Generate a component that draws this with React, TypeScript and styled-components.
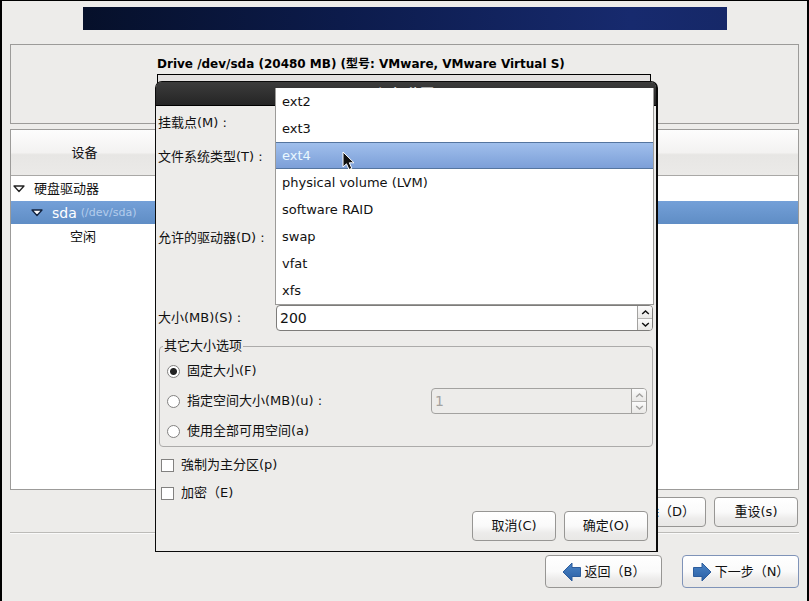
import React, { useState } from "react";
import styled, { createGlobalStyle } from "styled-components";

const GlobalStyle = createGlobalStyle`
  *, *::before, *::after { box-sizing: border-box; }
  body {
    margin: 0;
    background: #edecea;
    color: #111;
    font-family: "DejaVu Sans", "Noto Sans CJK SC", sans-serif;
    font-size: 13px;
    line-height: 20px;
  }
  button, input { font: inherit; color: inherit; }
`;

const Screen = styled.div`
  position: relative;
  display: flex;
  flex-direction: column;
  min-height: 100vh;
  padding: 6px 8px 13px;
  border: solid #000;
  border-width: 1px 2px 0;
  background: #edecea;
`;

const Banner = styled.header`
  height: 23px;
  margin: 0 72px 14px 73px;
  background: linear-gradient(90deg, #06102a, #0c1b4b 40%, #172a6e 85%, #162868);
`;

const DrivePanel = styled.section`
  height: 80px;
  padding: 9px 147px 0 146px;
  border: 1px solid #9c9b99;
  overflow: hidden;
`;

const DriveTitle = styled.h1`
  margin: 0;
  font-size: 12px;
  line-height: 20px;
  font-weight: bold;
  white-space: nowrap;
  color: #000;
`;

const DriveBar = styled.div`
  height: 40px;
  border: 1px solid #000;
  background: #e3e1e0;
`;

const TreeFrame = styled.div`
  flex: 1;
  margin: 5px 0 7px;
  border: 1px solid #9c9b99;
  background: #fff;
`;

const Tree = styled.table`
  width: 100%;
  border-collapse: separate;
  border-spacing: 0;
`;

const HeadCell = styled.th`
  height: 46px;
  padding: 0;
  border-bottom: 1px solid #a9a8a6;
  background: linear-gradient(#fdfdfd, #f3f2f1 50%, #e7e6e4 55%, #ebeae8);
  font-weight: normal;
  text-align: center;
`;

const TreeRow = styled.tr<{ $selected?: boolean }>`
  background: ${(p) => (p.$selected ? "linear-gradient(#74a0d8, #5f8dc5)" : "#fff")};
  color: ${(p) => (p.$selected ? "#fff" : "#111")};
`;

const TreeCell = styled.td<{ $level: number }>`
  height: ${(p) => [25, 23, 25][p.$level]}px;
  padding: 0 0 0 ${(p) => [2, 20, 59][p.$level]}px;
`;

const Node = styled.span<{ $large?: boolean }>`
  display: flex;
  align-items: center;
  gap: 9px;
  font-size: ${(p) => (p.$large ? 14 : 13)}px;
`;

const DevicePath = styled.small`
  margin-left: -5px;
  font-size: 11px;
  color: #b4cdec;
`;

const ButtonBar = styled.div<{ $gap: number; $end?: number }>`
  display: flex;
  justify-content: flex-end;
  gap: ${(p) => p.$gap}px;
  padding-right: ${(p) => p.$end ?? 0}px;
`;

const PushButton = styled.button<{ $tall?: boolean; $focus?: boolean }>`
  display: flex;
  align-items: center;
  justify-content: center;
  gap: 3px;
  min-width: ${(p) => (p.$tall ? 117 : 84)}px;
  height: ${(p) => (p.$tall ? 33 : 30)}px;
  padding: 0 6px;
  border: 1px solid ${(p) => (p.$focus ? "#7f93b8" : "#979694")};
  border-radius: 4px;
  background: linear-gradient(#fff, #fafafa 50%, #ecebea 75%, #e9e8e6);
  white-space: nowrap;
`;

const Divider = styled.hr`
  width: 100%;
  height: 2px;
  margin: 5px 0 21px;
  border: solid;
  border-width: 1px 0;
  border-color: #bcbbb8 #fff #fafafa;
`;

const DialogLayer = styled.div`
  position: absolute;
  inset: 0;
  padding: 80px 149px 0 153px;
`;

const Dialog = styled.section`
  border: solid #0a0a0a;
  border-width: 1px 2px 1px 1px;
  border-radius: 7px 7px 0 0;
  background: #edecea;
`;

const TitleBar = styled.h2`
  height: 24px;
  margin: 0;
  border-bottom: 1px solid #000;
  border-radius: 5px 5px 0 0;
  background: linear-gradient(#3c3c3c, #252525);
  color: #fff;
  font-size: 14px;
  line-height: 24px;
  text-align: center;
`;

const FormBody = styled.div`
  padding: 0 3px 10px 2px;
`;

const FieldRow = styled.div<{ $height: number }>`
  display: grid;
  grid-template-columns: 117px 1fr;
  align-items: center;
  height: ${(p) => p.$height}px;
`;

const Field = styled.div`
  position: relative;
  height: 100%;
  display: flex;
  align-items: center;
`;

const MountInput = styled.input`
  width: 100%;
  height: 26px;
  border: 1px solid #8f8e8c;
  border-radius: 4px;
`;

const Popup = styled.div`
  position: absolute;
  z-index: 2;
  top: -51px;
  left: 0;
  right: -1px;
  border: 1px solid #9c9b99;
  border-top: 0;
  background: #fff;
`;

const Option = styled.button<{ $active: boolean }>`
  position: relative;
  display: block;
  width: 100%;
  height: 27px;
  padding: 0 6px;
  border: solid ${(p) => (p.$active ? "#55759f" : "transparent")};
  border-width: 1px 0;
  background: ${(p) => (p.$active ? "linear-gradient(#a0bfec, #7c9fd8)" : "#fff")};
  color: ${(p) => (p.$active ? "#e9f8ff" : "#111")};
  text-align: left;
`;

const Pointer = styled.svg`
  position: absolute;
  left: 66px;
  top: 8px;
`;

const SpinFrame = styled.div<{ $off?: boolean }>`
  display: flex;
  width: ${(p) => (p.$off ? "45%" : "100%")};
  height: 26px;
  margin-left: ${(p) => (p.$off ? "auto" : "1px")};
  border: 1px solid ${(p) => (p.$off ? "#a3a2a0" : "#7d7c7a")};
  border-radius: 4px;
  background: ${(p) => (p.$off ? "#edecea" : "#fff")};
  color: ${(p) => (p.$off ? "#a3a2a0" : "#111")};
  overflow: hidden;
`;

const SpinInput = styled.input`
  flex: 1;
  min-width: 0;
  padding: 0 3px;
  border: 0;
  outline: 0;
  background: transparent;
  font-size: 14px;
  appearance: textfield;
  &::-webkit-inner-spin-button { appearance: none; margin: 0; }
`;

const Steppers = styled.div`
  display: grid;
  grid-template-rows: 1fr 1fr;
  width: 15px;
  border-left: 1px solid #a3a2a0;
`;

const Step = styled.button`
  display: grid;
  place-items: center;
  padding: 0;
  border: 0;
  background: linear-gradient(#fbfbfb, #e9e8e6);
  & + & { border-top: 1px solid #b5b4b2; }
`;

const Group = styled.fieldset`
  min-width: 0;
  margin: 1px 0 4px 1px;
  padding: 0 5px 0 3px;
  border: 1px solid #acabaa;
  border-radius: 4px;
`;

const Legend = styled.legend`
  padding: 0 1px;
  height: 20px;
`;

const ChoiceRow = styled.div<{ $height: number; $inset: number }>`
  display: flex;
  align-items: center;
  height: ${(p) => p.$height}px;
  padding-left: ${(p) => p.$inset}px;
`;

const Choice = styled.label`
  display: flex;
  align-items: center;
  gap: 7px;
  white-space: nowrap;
`;

const Radio = styled.input`
  appearance: none;
  width: 13px;
  height: 13px;
  margin: 0;
  border: 1px solid #828180;
  border-radius: 50%;
  background: #fff;
  &:checked { background: radial-gradient(circle, #222 0 3px, #fff 4px); }
`;

const Check = styled.input`
  appearance: none;
  width: 13px;
  height: 13px;
  margin: 0;
  border: 1px solid #828180;
  background: #fff;
  &:checked { background: #333; }
`;

const DialogActions = styled(ButtonBar)`
  margin-top: 4px;
`;

const Expander = ({ light }: { light?: boolean }) => (
  <svg width="12" height="8" viewBox="0 0 12 8" aria-hidden="true">
    <path d="M1 1h10L6 6.5z" fill="#fff" stroke={light ? "#10203c" : "#222"} strokeWidth="1.3" strokeLinejoin="round" />
  </svg>
);

const Chevron = ({ down }: { down?: boolean }) => (
  <svg width="9" height="6" viewBox="0 0 9 6" aria-hidden="true">
    <path d={down ? "M1.2 1l3.3 3L7.8 1" : "M1.2 5l3.3-3 3.3 3"} fill="none" stroke="currentColor" strokeWidth="1.5" />
  </svg>
);

const ArrowIcon = ({ left }: { left?: boolean }) => (
  <svg width="20" height="20" viewBox="0 0 20 20" aria-hidden="true">
    <defs>
      <linearGradient id={left ? "arrowBack" : "arrowNext"} x1="0" y1="0" x2="0" y2="1">
        <stop offset="0" stopColor="#4a84c6" />
        <stop offset="1" stopColor="#2a5fa4" />
      </linearGradient>
    </defs>
    <path
      d={left ? "M10 1v4.5h8.5v9H10V19L1 10z" : "M10 1v4.5H1.5v9H10V19l9-9z"}
      fill={`url(#${left ? "arrowBack" : "arrowNext"})`}
      stroke="#2c5c9c"
      strokeLinejoin="round"
    />
  </svg>
);

const fileSystems = ["ext2", "ext3", "ext4", "physical volume (LVM)", "software RAID", "swap", "vfat", "xfs"];

type SpinProps = { id: string; initial: number; label?: string; disabled?: boolean };

function SpinBox({ id, initial, label, disabled }: SpinProps) {
  const [value, setValue] = useState(initial);
  return (
    <SpinFrame $off={disabled}>
      <SpinInput
        id={id}
        type="number"
        aria-label={label}
        value={value}
        disabled={disabled}
        onChange={(e) => setValue(Number(e.target.value))}
      />
      <Steppers>
        <Step type="button" aria-label="+" disabled={disabled} onClick={() => setValue(value + 1)}>
          <Chevron />
        </Step>
        <Step type="button" aria-label="-" disabled={disabled} onClick={() => setValue(value - 1)}>
          <Chevron down />
        </Step>
      </Steppers>
    </SpinFrame>
  );
}

function PartitionDialog() {
  const [active, setActive] = useState("ext4");
  const [sizeMode, setSizeMode] = useState("fixed");
  return (
    <Dialog role="dialog" aria-labelledby="dialog-title">
      <TitleBar id="dialog-title">添加分区</TitleBar>
      <FormBody>
        <FieldRow $height={33}>
          <label htmlFor="mount">挂载点(M) :</label>
          <Field>
            <MountInput id="mount" />
          </Field>
        </FieldRow>
        <FieldRow $height={36}>
          <span id="fs-label">文件系统类型(T) :</span>
          <Field>
            <Popup role="listbox" aria-labelledby="fs-label">
              {fileSystems.map((name) => (
                <Option
                  key={name}
                  type="button"
                  role="option"
                  aria-selected={name === active}
                  $active={name === active}
                  onClick={() => setActive(name)}
                >
                  {name}
                  {name === active && (
                    <Pointer width="14" height="20" viewBox="0 0 14 20" aria-hidden="true">
                      <path d="M1 1v15l3.5-3.2L7 18.5l2.8-1.2-2.5-5.5H12z" fill="#111" stroke="#fff" strokeWidth="1" />
                    </Pointer>
                  )}
                </Option>
              ))}
            </Popup>
          </Field>
        </FieldRow>
        <FieldRow $height={126}>
          <span>允许的驱动器(D) :</span>
        </FieldRow>
        <FieldRow $height={34}>
          <label htmlFor="size">大小(MB)(S) :</label>
          <Field>
            <SpinBox id="size" initial={200} />
          </Field>
        </FieldRow>
        <Group>
          <Legend>其它大小选项</Legend>
          <ChoiceRow $height={30} $inset={4}>
            <Choice>
              <Radio type="radio" name="mode" checked={sizeMode === "fixed"} onChange={() => setSizeMode("fixed")} />
              固定大小(F)
            </Choice>
          </ChoiceRow>
          <ChoiceRow $height={30} $inset={4}>
            <Choice>
              <Radio type="radio" name="mode" checked={sizeMode === "upto"} onChange={() => setSizeMode("upto")} />
              指定空间大小(MB)(u) :
            </Choice>
            <SpinBox id="max-size" label="指定空间大小" initial={1} disabled />
          </ChoiceRow>
          <ChoiceRow $height={30} $inset={4}>
            <Choice>
              <Radio type="radio" name="mode" checked={sizeMode === "all"} onChange={() => setSizeMode("all")} />
              使用全部可用空间(a)
            </Choice>
          </ChoiceRow>
        </Group>
        <ChoiceRow $height={28} $inset={3}>
          <Choice>
            <Check type="checkbox" />
            強制为主分区(p)
          </Choice>
        </ChoiceRow>
        <ChoiceRow $height={28} $inset={3}>
          <Choice>
            <Check type="checkbox" />
            加密（E)
          </Choice>
        </ChoiceRow>
        <DialogActions $gap={8} $end={5}>
          <PushButton type="button">取消(C)</PushButton>
          <PushButton type="button">确定(O)</PushButton>
        </DialogActions>
      </FormBody>
    </Dialog>
  );
}

export default function App() {
  return (
    <>
      <GlobalStyle />
      <Screen>
        <Banner />
        <DrivePanel>
          <DriveTitle>Drive /dev/sda (20480 MB) (型号: VMware, VMware Virtual S)</DriveTitle>
          <DriveBar />
        </DrivePanel>
        <TreeFrame>
          <Tree>
            <colgroup>
              <col width="147" />
              <col />
            </colgroup>
            <thead>
              <tr>
                <HeadCell scope="col">设备</HeadCell>
                <HeadCell as="td" />
              </tr>
            </thead>
            <tbody>
              <TreeRow>
                <TreeCell $level={0} colSpan={2}>
                  <Node><Expander />硬盘驱动器</Node>
                </TreeCell>
              </TreeRow>
              <TreeRow $selected>
                <TreeCell $level={1} colSpan={2}>
                  <Node $large><Expander light />sda <DevicePath>(/dev/sda)</DevicePath></Node>
                </TreeCell>
              </TreeRow>
              <TreeRow>
                <TreeCell $level={2} colSpan={2}>空闲</TreeCell>
              </TreeRow>
            </tbody>
          </Tree>
        </TreeFrame>
        <ButtonBar $gap={8} $end={1}>
          <PushButton type="button">删除（D）</PushButton>
          <PushButton type="button">重设(s)</PushButton>
        </ButtonBar>
        <Divider />
        <ButtonBar $gap={20}>
          <PushButton type="button" $tall><ArrowIcon left />返回（B）</PushButton>
          <PushButton type="button" $tall $focus><ArrowIcon />下一步（N）</PushButton>
        </ButtonBar>
        <DialogLayer>
          <PartitionDialog />
        </DialogLayer>
      </Screen>
    </>
  );
}
